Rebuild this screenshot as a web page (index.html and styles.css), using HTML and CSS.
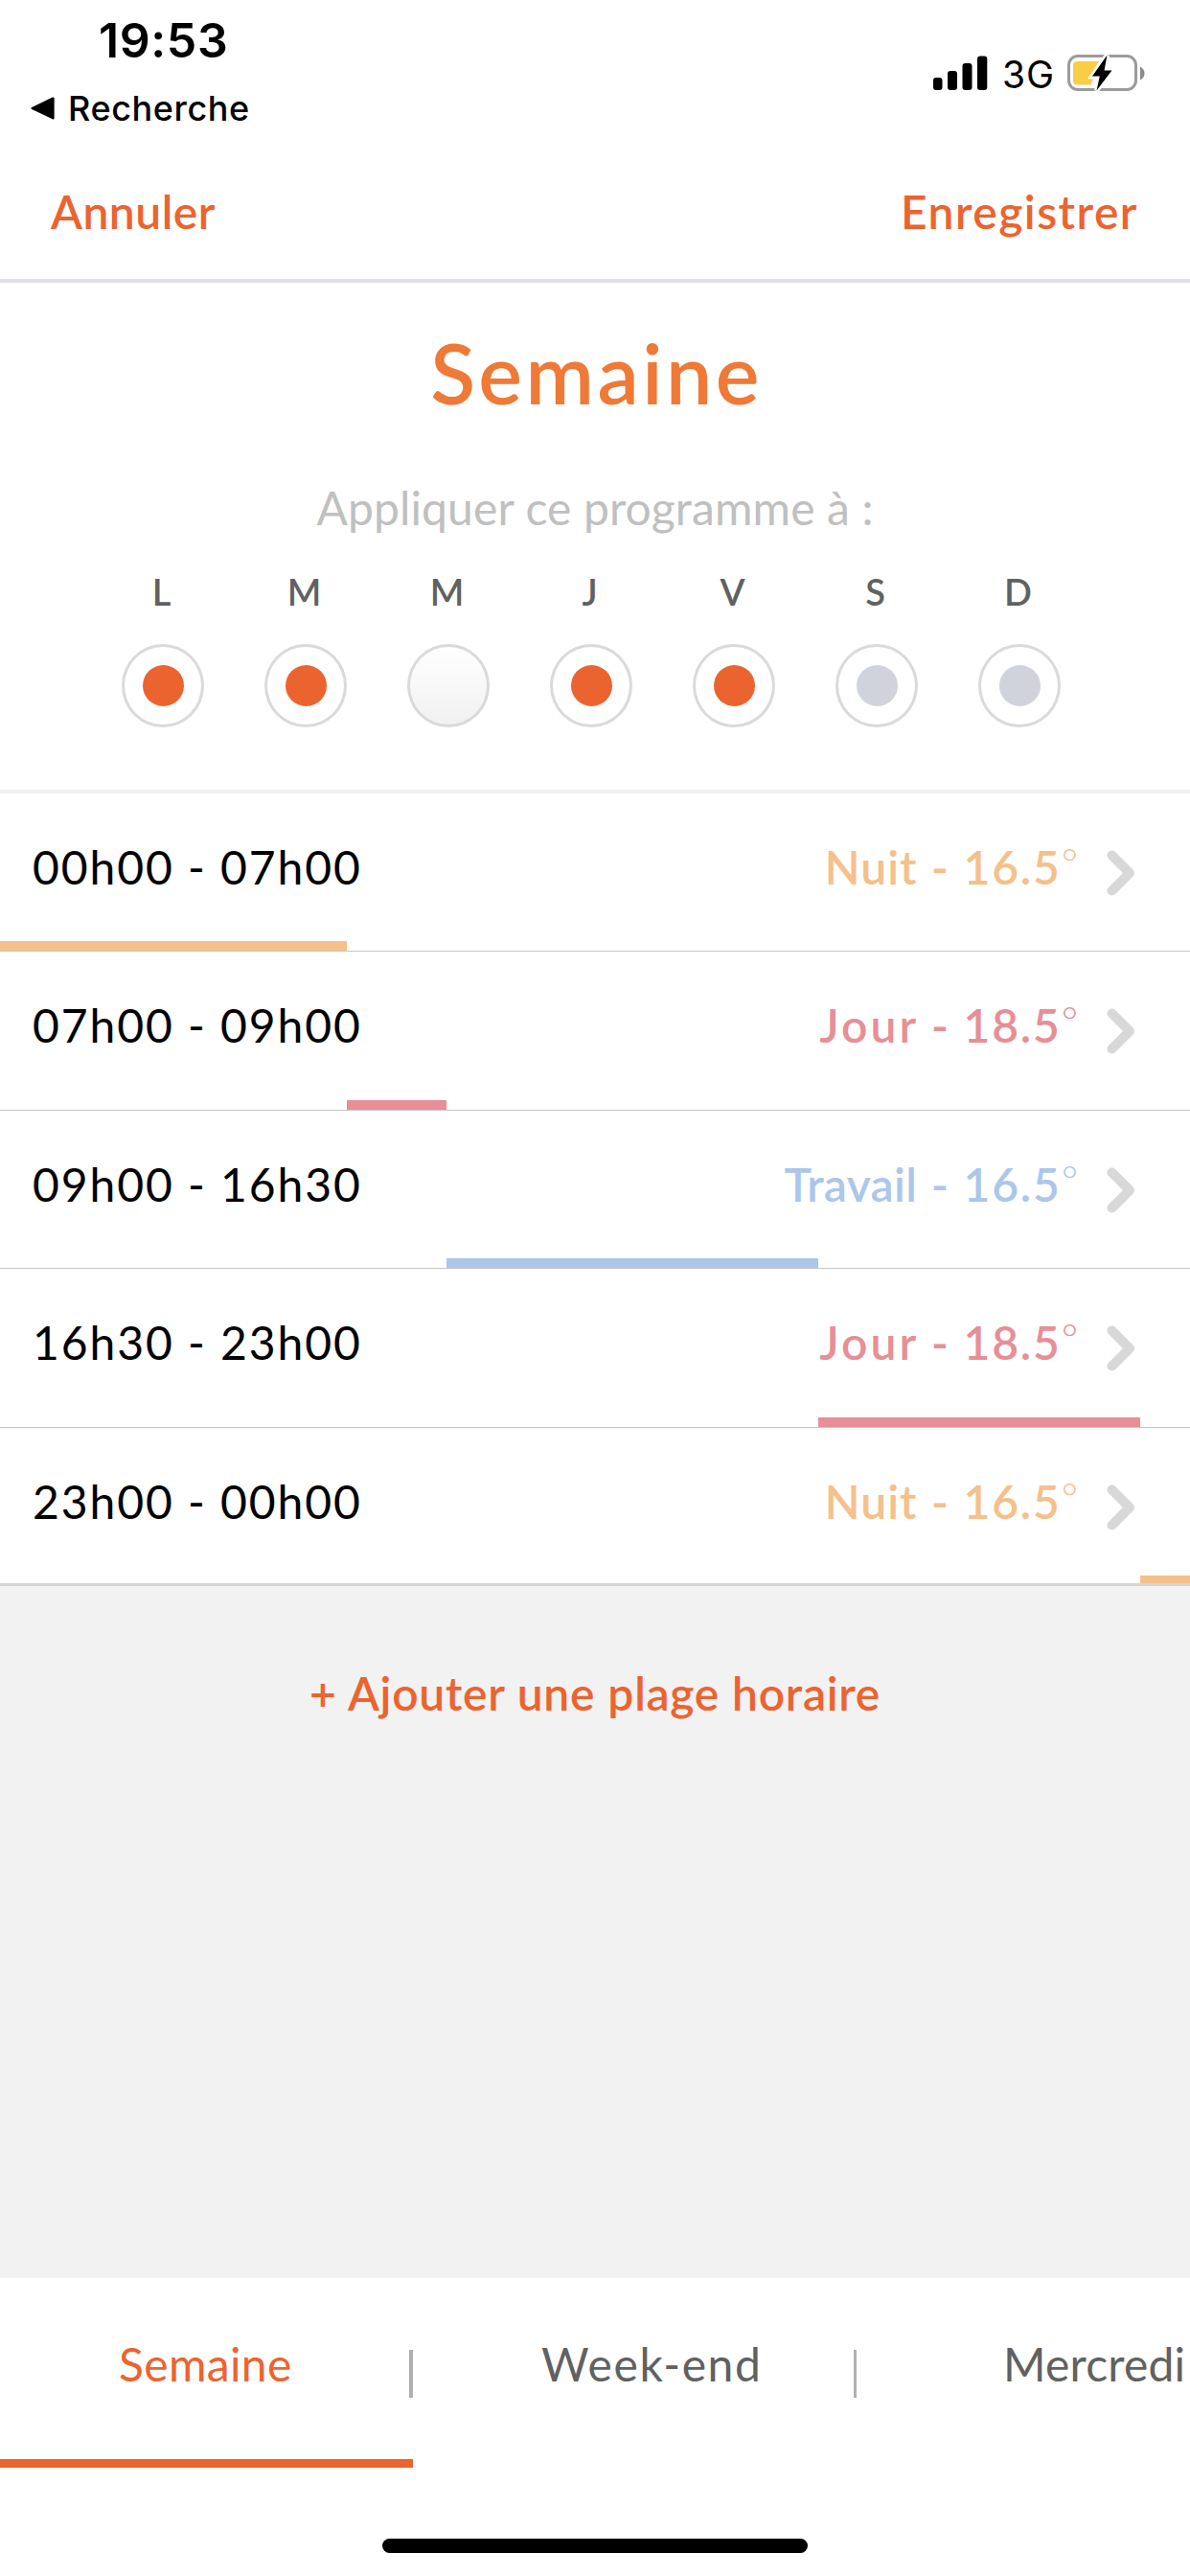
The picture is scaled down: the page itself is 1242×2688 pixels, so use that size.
FILE: index.html
```html
<!DOCTYPE html>
<html lang="fr">
<head>
<meta charset="utf-8">
<title>Programme – Semaine</title>
<link rel="stylesheet" href="styles.css">
</head>
<body>
<div class="screen">
  <div class="status">
    <div class="status-left">
      <div class="clock">19:53</div>
      <div class="back">
        <svg class="back-arrow" viewBox="0 0 25 24"><path d="M1.2 10.9 22.8.6Q24.6 0 24.6 1.6V22.4Q24.6 24 22.8 23.3L1.2 13.1Q-.5 12 1.2 10.9Z"/></svg>
        <span>Recherche</span>
      </div>
    </div>
    <div class="status-right">
      <svg class="signal" viewBox="0 0 57 36"><rect x="0" y="23" width="9.5" height="13" rx="3"/><rect x="15" y="16" width="10" height="20" rx="3"/><rect x="30.5" y="8" width="10" height="28" rx="3"/><rect x="46" y="0.5" width="10.3" height="35.5" rx="3"/></svg>
      <span class="network">3G</span>
      <svg class="battery" viewBox="0 0 81 40">
        <rect x="1.5" y="2.5" width="70" height="35" rx="9.5" fill="none" stroke="#9b9b9b" stroke-width="3"/>
        <path d="M10.5 8H33L21.5 26.5H27L24.5 32.500H10.500Q6 32.500 6 28V12.500Q6 8 10.500 8Z" fill="#f8ce46"/>
        <path d="M41.500 1.500 26 23.500H33.800L30.500 38.500 46.500 17.500H38.500Z" fill="#000" stroke="#fff" stroke-width="5" paint-order="stroke"/>
        <path d="M76 13.500Q80.500 16 80.500 20.500T76 27.500Z" fill="#8c8c8c"/>
      </svg>
    </div>
  </div>
  <div class="nav">
    <span class="nav-cancel">Annuler</span>
    <span class="nav-save">Enregistrer</span>
  </div>
  <div class="program">
    <h1 class="title">Semaine</h1>
    <p class="subtitle">Appliquer ce programme à :</p>
    <div class="days">
      <div class="day"><span class="day-name">L</span><span class="radio on"></span></div>
      <div class="day"><span class="day-name">M</span><span class="radio on"></span></div>
      <div class="day"><span class="day-name">M</span><span class="radio empty"></span></div>
      <div class="day"><span class="day-name">J</span><span class="radio on"></span></div>
      <div class="day"><span class="day-name">V</span><span class="radio on"></span></div>
      <div class="day"><span class="day-name">S</span><span class="radio off"></span></div>
      <div class="day"><span class="day-name">D</span><span class="radio off"></span></div>
    </div>
  </div>
  <div class="slots">
    <div class="slot night">
      <div class="slot-main"><span class="hours">00h00 - 07h00</span><span class="mode"><span class="mode-name">Nuit</span><span class="temp">- 16.5</span><span class="deg">°</span></span><svg class="chevron" viewBox="0 0 30 48"><path d="M5.500 5.500 24 24 5.500 42.500"/></svg></div>
      <div class="track"><div class="bar" style="margin-left:0;width:29.167%"></div></div>
    </div>
    <div class="slot day-mode tall">
      <div class="slot-main"><span class="hours">07h00 - 09h00</span><span class="mode"><span class="mode-name">Jour</span><span class="temp">- 18.5</span><span class="deg">°</span></span><svg class="chevron" viewBox="0 0 30 48"><path d="M5.500 5.500 24 24 5.500 42.500"/></svg></div>
      <div class="track"><div class="bar" style="margin-left:29.167%;width:8.333%"></div></div>
    </div>
    <div class="slot work">
      <div class="slot-main"><span class="hours">09h00 - 16h30</span><span class="mode"><span class="mode-name">Travail</span><span class="temp">- 16.5</span><span class="deg">°</span></span><svg class="chevron" viewBox="0 0 30 48"><path d="M5.500 5.500 24 24 5.500 42.500"/></svg></div>
      <div class="track"><div class="bar" style="margin-left:37.5%;width:31.25%"></div></div>
    </div>
    <div class="slot day-mode tall">
      <div class="slot-main"><span class="hours">16h30 - 23h00</span><span class="mode"><span class="mode-name">Jour</span><span class="temp">- 18.5</span><span class="deg">°</span></span><svg class="chevron" viewBox="0 0 30 48"><path d="M5.500 5.500 24 24 5.500 42.500"/></svg></div>
      <div class="track"><div class="bar" style="margin-left:68.75%;width:27.083%"></div></div>
    </div>
    <div class="slot night last">
      <div class="slot-main"><span class="hours">23h00 - 00h00</span><span class="mode"><span class="mode-name">Nuit</span><span class="temp">- 16.5</span><span class="deg">°</span></span><svg class="chevron" viewBox="0 0 30 48"><path d="M5.500 5.500 24 24 5.500 42.500"/></svg></div>
      <div class="track"><div class="bar" style="margin-left:95.833%;width:4.167%"></div></div>
    </div>
  </div>
  <div class="add">+ Ajouter une plage horaire</div>
  <div class="tabs">
    <div class="tab active"><span>Semaine</span><i class="sep"></i></div>
    <div class="tab second"><span>Week-end</span><i class="sep thin"></i></div>
    <div class="tab third"><span>Mercredi</span></div>
  </div>
  <div class="home"></div>
</div>
</body>
</html>
```
FILE: styles.css
```css
* { box-sizing: border-box; }
body { margin: 0; background: #fff; }
.screen {
  width: 1242px;
  height: 2688px;
  display: flex;
  flex-direction: column;
  overflow: hidden;
  background: #fff;
  font: 400 48px/57px Lato, sans-serif;
}
svg { display: block; flex: none; }

/* Status bar */
.status {
  height: 160px;
  display: flex;
  justify-content: space-between;
  padding: 12px 47px 0 32px;
  font-family: Inter, sans-serif;
  color: #000;
}
.clock {
  margin-left: 71px;
  font-size: 50px;
  line-height: 60px;
  font-weight: 600;
  letter-spacing: 0.6px;
}
.back {
  margin-top: 19px;
  display: flex;
  align-items: center;
  gap: 14px;
  font-size: 36px;
  line-height: 44px;
  font-weight: 500;
  letter-spacing: 0.6px;
}
.back-arrow { width: 25px; height: 24px; }
.status-right { display: flex; padding-top: 42px; }
.signal { width: 57px; height: 36px; margin-top: 4px; }
.network {
  margin-left: 15px;
  width: 68px;
  font-size: 39px;
  line-height: 47px;
  letter-spacing: 0.9px;
}
.battery { width: 81px; height: 40px; margin-top: 2px; }

/* Navigation */
.nav {
  height: 135px;
  display: flex;
  justify-content: space-between;
  align-items: center;
  padding: 0 54px 10px 53px;
  border-bottom: 4px solid #e0dfe5;
  color: #eb6430;
  font-weight: 600;
}
.nav-cancel { letter-spacing: 0.5px; }
.nav-save { letter-spacing: 1.45px; }

/* Program header */
.program {
  height: 533px;
  padding-top: 42px;
  border-bottom: 4px solid #f2f2f2;
  text-align: center;
}
.title {
  margin: 0;
  padding-left: 3px;
  font-size: 86px;
  line-height: 103px;
  font-weight: 600;
  letter-spacing: 3.5px;
  color: #ef7936;
}
.subtitle { margin: 61px 0 0; color: #c0c0c0; letter-spacing: 0.12px; }
.days {
  margin: 36px 0 0 95.5px;
  display: grid;
  grid-template-columns: repeat(7, 149px);
}
.day { display: flex; flex-direction: column; align-items: center; gap: 32px; }
.day-name {
  margin-right: 3px;
  font-size: 38px;
  line-height: 46px;
  font-weight: 600;
  color: #616161;
}
.radio {
  width: 86px;
  height: 87px;
  border: 3px solid #dadada;
  border-radius: 50%;
  display: grid;
  place-items: center;
}
.radio::before { content: ""; width: 43px; height: 43px; border-radius: 50%; }
.on::before { background: #eb6430; }
.off::before { background: #d0d3dc; }
.empty { background: linear-gradient(#fff, #f1f1f1); }

/* Time slots */
.slot { height: 165px; display: flex; flex-direction: column; border-bottom: 1px solid #c8c7c8; }
.tall { height: 166px; }
.last { border-bottom: 3px solid #d6d6d6; }
.slot-main { flex: 1; display: flex; padding: 48px 57px 0 34px; }
.hours { color: #000; letter-spacing: 1.93px; }
.mode { margin-left: auto; font-weight: 600; display: flex; }
.temp { letter-spacing: 1.8px; }
.deg { font-size: 42px; line-height: 48px; font-weight: 300; }
.chevron {
  width: 30px;
  height: 48px;
  margin: 11px 0 0 30px;
  fill: none;
  stroke: #d8d8d8;
  stroke-width: 10;
  stroke-linecap: round;
  stroke-linejoin: round;
}
.bar { height: 10px; }
.last .bar { height: 8px; }
.night .mode { color: #f5c08a; }
.night .mode-name { letter-spacing: 1px; margin-right: 14.5px; }
.night .bar { background: #f5c08a; }
.day-mode .mode { color: #e78f96; }
.day-mode .mode-name { letter-spacing: 3.1px; margin-right: 12.8px; }
.day-mode .bar { background: #e78f96; }
.work .mode { color: #acc6ec; }
.work .mode-name { letter-spacing: 0.3px; margin-right: 15px; }
.work .bar { background: #acc6ec; }

.add {
  height: 722px;
  padding-top: 83px;
  background: #f2f2f2;
  text-align: center;
  color: #eb6430;
  font-weight: 600;
  letter-spacing: 0.7px;
  word-spacing: 0.5px;
}

/* Bottom tabs */
.tabs { height: 198px; display: flex; color: #616161; }
.tab { display: flex; justify-content: space-between; padding-top: 61px; white-space: nowrap; }
.active { width: 431px; padding-left: 124px; border-bottom: 9px solid #eb6430; color: #eb6430; letter-spacing: 0.35px; }
.second { width: 463px; padding-left: 134px; letter-spacing: 1.58px; }
.third { padding-left: 153px; letter-spacing: 0.17px; }
.sep { width: 4px; height: 50px; margin-top: 14px; background: #b0b0b0; }
.thin { width: 3px; }
.home { width: 444px; height: 15px; margin: 74px 0 0 399px; border-radius: 8px; background: #000; }
```
